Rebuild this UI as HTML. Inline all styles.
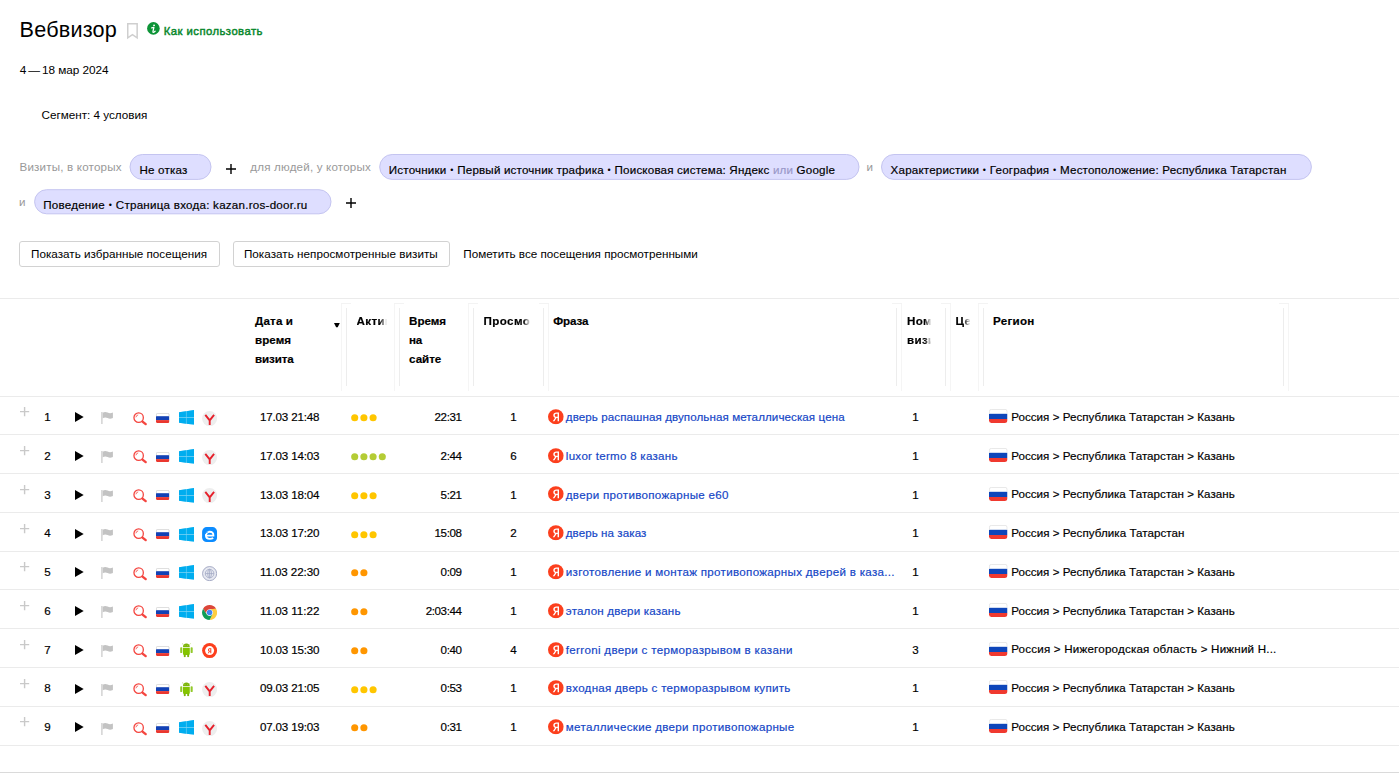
<!DOCTYPE html>
<html lang="ru"><head><meta charset="utf-8"><title>Вебвизор</title>
<style>
html,body{margin:0;padding:0;background:#fff}
body{width:1399px;height:773px;position:relative;overflow:hidden;font-family:"Liberation Sans",sans-serif;font-size:12px;color:#000}
.t{position:absolute;white-space:pre;line-height:20px}
.u{-webkit-text-stroke:0.18px}
.m{-webkit-text-stroke:0.45px}
.t u{text-decoration:none;letter-spacing:-1.3px}
.t b{font-weight:400;font-size:9px;vertical-align:0.8px;letter-spacing:0.5px;margin-left:0.3px;-webkit-text-stroke:0}
.t i{font-style:normal;color:#9a98c9}
.pill{position:absolute;box-sizing:border-box;background:#dedeff;border:1px solid #c9c9f3;border-radius:13px}
.btn{position:absolute;box-sizing:border-box;border:1px solid #d2d2d2;border-radius:3px;background:#fff}
.hl{position:absolute;left:0;width:1399px;height:1px;background:#ebebeb}
.v{position:absolute;width:1px}
.ic{position:absolute;overflow:visible}
.dot{position:absolute;width:7.4px;height:7.4px;border-radius:50%}
.fade{position:absolute;overflow:hidden;white-space:pre;line-height:20px;font-weight:700;font-size:11.6px;-webkit-text-stroke:0.18px;letter-spacing:0.4px}
</style></head><body>

<svg width="0" height="0" style="position:absolute">
<defs>
<clipPath id="c-ru"><rect x="0" y="0" width="13.4" height="10" rx="1.6"/></clipPath>
<clipPath id="c-ruf"><rect x="0" y="0" width="18.5" height="14" rx="2.4"/></clipPath>
<symbol id="i-play" viewBox="0 0 9 10" width="9" height="10"><path d="M0 0L8.7 5 0 10z" fill="#000"/></symbol>
<symbol id="i-flag" viewBox="0 0 13 12" width="13" height="12"><rect x="0" y="0" width="1.7" height="12" fill="#d8d8d8"/><path d="M1.7.7C3.4-.2 5-.1 6.6.6S9.8 1.4 11.9.5V6C9.8 6.9 8.2 6.8 6.6 6.1S3.4 5.3 1.7 6.3z" fill="#c3c3c3"/></symbol>
<symbol id="i-mag" viewBox="0 0 15 14" width="15" height="14"><circle cx="5.65" cy="5.65" r="4.7" fill="none" stroke="#f4453f" stroke-width="1.3"/><path d="M9.5 9.6L12.7 12.1" stroke="#f4453f" stroke-width="2.4" stroke-linecap="round"/><path d="M2.9 5.3A2.9 2.9 0 0 1 5.2 2.9" fill="none" stroke="#f4453f" stroke-width=".8"/></symbol>
<symbol id="i-ru" viewBox="0 0 14 10.2" width="14" height="10.2"><g clip-path="url(#c-ru)"><rect width="13.4" height="10" fill="#fff"/><rect y="3.2" width="13.4" height="4" fill="#1241b5"/><rect y="7.1" width="13.4" height="3" fill="#ea372f"/></g><path d="M.35 3.2V1.6A1.25 1.25 0 0 1 1.6.35h10.2a1.25 1.25 0 0 1 1.25 1.25v1.6" fill="none" stroke="#c9c9c9" stroke-width=".7"/></symbol>
<symbol id="i-ruf" viewBox="0 0 18.6 14" width="18.6" height="14"><g clip-path="url(#c-ruf)"><rect width="18.5" height="14" fill="#fff"/><rect y="4.8" width="18.5" height="5.3" fill="#0e46ba"/><rect y="10" width="18.5" height="4" fill="#f0392f"/></g><path d="M.4 4.8V2.4A2 2 0 0 1 2.4.4h13.7a2 2 0 0 1 2 2v2.4" fill="none" stroke="#e0e0e0" stroke-width=".8"/></symbol>
<symbol id="i-win" viewBox="0 0 15.2 15.2" width="15.2" height="14.8" preserveAspectRatio="none"><path d="M0 2.4L15 0V15.2L0 13z" fill="#7fd4f5"/><path d="M0 2.4L6.95 1.28V7.3H0zM7.5 1.2L15 0V7.3H7.5zM0 7.85H6.95V14.02L0 13zM7.5 7.85H15v7.35L7.5 14.1z" fill="#00adef"/></symbol>
<symbol id="i-yb" viewBox="0 0 15.2 15.2" width="15.2" height="15.2"><circle cx="7.6" cy="7.6" r="7.5" fill="#eee"/><path d="M3.3 3.8L7.7 9.4 12.1 3.8M7.7 9.2V14" fill="none" stroke="#e6212c" stroke-width="1.9"/></symbol>
<symbol id="i-edge" viewBox="0 0 15.2 15.2" width="15.2" height="15.2"><rect x=".1" y=".1" width="15" height="15" rx="4.6" fill="#0c8cff"/><path d="M4.2 8.6H11.4C11.5 6.1 10 4.7 7.8 4.7 5.6 4.7 3.9 6.1 3.9 8.3 3.9 10.6 5.5 11.9 7.9 11.9 9.2 11.9 10.3 11.6 11.2 11" fill="none" stroke="#fff" stroke-width="1.9"/><path d="M3.2 6.9C4 5.6 5 5 6.2 4.8" fill="none" stroke="#0c8cff" stroke-width=".9"/></symbol>
<symbol id="i-globe" viewBox="0 0 15.2 15.2" width="15.2" height="15.2"><circle cx="7.6" cy="7.6" r="7.05" fill="#e7e9f1" stroke="#9da3bf" stroke-width=".9"/><g fill="none" stroke="#9fa5c2" stroke-width=".75"><circle cx="7.6" cy="7.6" r="4.3"/><ellipse cx="7.6" cy="7.6" rx="1.9" ry="4.3"/><path d="M3.3 7.6h8.6M7.6 3.3v8.6"/></g></symbol>
<symbol id="i-chrome" viewBox="0 0 15.2 15.2" width="15.2" height="15.2"><circle cx="7.6" cy="7.6" r="7.3" fill="#fff"/><path d="M1.1 3.85A7.5 7.5 0 0 1 14.1 3.85L7.6 4.15A3.45 3.45 0 0 0 4.61 9.33z" fill="#dc4639"/><path d="M14.1 3.85A7.5 7.5 0 0 1 7.6 15.1L10.59 9.33A3.45 3.45 0 0 0 7.6 4.15z" fill="#ffcd40"/><path d="M7.6 15.1A7.5 7.5 0 0 1 1.1 3.85L4.61 9.33A3.45 3.45 0 0 0 10.59 9.33z" fill="#0f9d58"/><circle cx="7.6" cy="7.6" r="2.75" fill="#4285f4"/></symbol>
<symbol id="i-android" viewBox="0 0 13 14.4" width="13" height="14.4"><path d="M2 .4L3.5 1.7M10.8 .4L9.3 1.7" stroke="#9ccc3c" stroke-width=".5"/><path d="M3 4.2A3.4 3.6 0 0 1 9.8 4.2z" fill="#7db50a"/><path d="M3 4.9h6.8v6.2a.8.8 0 0 1-.8.8H3.8a.8.8 0 0 1-.8-.8z" fill="#84c400"/><rect x=".2" y="4.2" width="2.1" height="5.9" rx=".9" fill="#92c92a"/><rect x="10.6" y="4.2" width="2.1" height="5.9" rx=".9" fill="#92c92a"/><rect x="3.8" y="11.2" width="1.9" height="3.1" rx=".7" fill="#7db50a"/><rect x="7.2" y="11.2" width="1.9" height="3.1" rx=".7" fill="#7db50a"/><circle cx="5" cy="2.6" r=".35" fill="#d6efa0"/><circle cx="7.8" cy="2.6" r=".35" fill="#d6efa0"/></symbol>
<symbol id="i-ya" viewBox="0 0 15.2 15.2" width="15.2" height="15.2"><circle cx="7.6" cy="7.6" r="7.5" fill="#fc3f1d"/><circle cx="7.6" cy="7.6" r="4.5" fill="#fff"/><path d="M9.3 10.3H8.3V8.6H7.8L6.8 10.3H5.7L6.9 8.4C6.3 8.1 6 7.6 6 6.9 6 5.9 6.7 5.2 7.9 5.2H9.3zM8.3 6H8C7.4 6 7 6.3 7 6.9S7.4 7.8 8 7.8h.3z" fill="#fc3f1d" fill-rule="evenodd"/></symbol>
<symbol id="i-yas" viewBox="0 0 15.8 15.6" width="15.8" height="15.6"><ellipse cx="7.85" cy="7.75" rx="7.85" ry="7.6" fill="#fc3f1d"/><path d="M11 12.3H9.6V9H8.5L6.4 12.3H4.8L7.1 8.8C5.9 8.3 5.3 7.4 5.3 6.2 5.3 4.5 6.5 3.5 8.4 3.5H11zM9.6 4.7h-1c-1.1 0-1.8.5-1.8 1.5s.7 1.6 1.8 1.6h1z" fill="#fff" fill-rule="evenodd"/></symbol>
</defs></svg>

<svg class="ic" style="left:0;top:150px" width="1399" height="70" fill="#dedeff" stroke="#c4c4f0" stroke-width="1"><rect x="130.0" y="4.5" width="81.0" height="24.9" rx="12.45"/><rect x="379.7" y="4.5" width="479.3" height="24.9" rx="12.45"/><rect x="881.5" y="4.5" width="429.9" height="24.9" rx="12.45"/><rect x="34.6" y="39.7" width="296.4" height="24.1" rx="12.05"/></svg>
<div class="btn" style="left:19.3px;top:241px;width:200.4px;height:26.0px"></div>
<div class="btn" style="left:233.3px;top:241px;width:216.5px;height:26.0px"></div>
<div class="hl" style="top:298px"></div>
<div class="hl" style="top:396px"></div>
<div class="hl" style="top:434px"></div>
<div class="hl" style="top:473px"></div>
<div class="hl" style="top:512px"></div>
<div class="hl" style="top:551px"></div>
<div class="hl" style="top:589px"></div>
<div class="hl" style="top:628px"></div>
<div class="hl" style="top:667px"></div>
<div class="hl" style="top:706px"></div>
<div class="hl" style="top:745px"></div>
<div class="hl" style="top:772px;height:1px;background:#dadada"></div>
<div class="v" style="left:341px;top:303px;height:88px;background:#f5f5f5"></div>
<div class="v" style="left:346px;top:308px;height:78px;background:#ededed"></div>
<div style="position:absolute;left:341px;top:303px;width:10px;height:1px;background:#f3f3f3"></div>
<div class="v" style="left:394px;top:303px;height:88px;background:#f5f5f5"></div>
<div class="v" style="left:399px;top:308px;height:78px;background:#ededed"></div>
<div style="position:absolute;left:394px;top:303px;width:10px;height:1px;background:#f3f3f3"></div>
<div class="v" style="left:468px;top:303px;height:88px;background:#f5f5f5"></div>
<div class="v" style="left:473px;top:308px;height:78px;background:#ededed"></div>
<div style="position:absolute;left:468px;top:303px;width:10px;height:1px;background:#f3f3f3"></div>
<div class="v" style="left:978px;top:303px;height:88px;background:#f5f5f5"></div>
<div class="v" style="left:983px;top:308px;height:78px;background:#ededed"></div>
<div style="position:absolute;left:978px;top:303px;width:10px;height:1px;background:#f3f3f3"></div>
<div class="v" style="left:548px;top:303px;height:88px;background:#f5f5f5"></div>
<div class="v" style="left:543px;top:308px;height:78px;background:#ededed"></div>
<div style="position:absolute;left:539px;top:303px;width:10px;height:1px;background:#f3f3f3"></div>
<div class="v" style="left:901px;top:303px;height:88px;background:#f5f5f5"></div>
<div class="v" style="left:896px;top:308px;height:78px;background:#ededed"></div>
<div style="position:absolute;left:892px;top:303px;width:10px;height:1px;background:#f3f3f3"></div>
<div class="v" style="left:950px;top:303px;height:88px;background:#f5f5f5"></div>
<div class="v" style="left:945px;top:308px;height:78px;background:#ededed"></div>
<div style="position:absolute;left:941px;top:303px;width:10px;height:1px;background:#f3f3f3"></div>
<div class="v" style="left:1288px;top:303px;height:88px;background:#f5f5f5"></div>
<div class="v" style="left:1283px;top:308px;height:78px;background:#ededed"></div>
<div style="position:absolute;left:1279px;top:303px;width:10px;height:1px;background:#f3f3f3"></div>
<div class="fade" style="left:356.5px;top:311.0px;width:30px;-webkit-mask-image:linear-gradient(to right,#000 23px,transparent 30px);mask-image:linear-gradient(to right,#000 23px,transparent 30px)">Активность</div>
<div class="fade" style="left:483.5px;top:311.0px;width:46.5px;-webkit-mask-image:linear-gradient(to right,#000 39.5px,transparent 46.5px);mask-image:linear-gradient(to right,#000 39.5px,transparent 46.5px)">Просмотры</div>
<div class="fade" style="left:906.9px;top:311.0px;width:24.5px;-webkit-mask-image:linear-gradient(to right,#000 17.5px,transparent 24.5px);mask-image:linear-gradient(to right,#000 17.5px,transparent 24.5px)">Номер</div>
<div class="fade" style="left:906.9px;top:329.9px;width:24.5px;-webkit-mask-image:linear-gradient(to right,#000 17.5px,transparent 24.5px);mask-image:linear-gradient(to right,#000 17.5px,transparent 24.5px)">визита</div>
<div class="fade" style="left:955.5px;top:311.0px;width:14.5px;-webkit-mask-image:linear-gradient(to right,#000 7.5px,transparent 14.5px);mask-image:linear-gradient(to right,#000 7.5px,transparent 14.5px)">Цели</div>
<span class="t" style="left:19.50px;top:19.70px;font-size:21.6px;letter-spacing:0.231px;">Вебвизор</span>
<span class="t m" style="left:163.80px;top:20.60px;font-size:11.3px;color:#07872b;letter-spacing:0.454px;">Как использовать</span>
<span class="t" style="left:19.70px;top:60.00px;font-size:11.8px;letter-spacing:-0.046px;">4<u> </u>—<u> </u>18 мар 2024</span>
<span class="t" style="left:41.60px;top:104.60px;font-size:11.7px;letter-spacing:-0.010px;">Сегмент: 4 условия</span>
<span class="t" style="left:19.50px;top:156.70px;font-size:11.6px;color:#999;letter-spacing:0.184px;">Визиты, в которых</span>
<span class="t u" style="left:139.40px;top:159.80px;font-size:11.6px;letter-spacing:0.198px;">Не отказ</span>
<span class="t" style="left:250.30px;top:156.70px;font-size:11.6px;color:#999;letter-spacing:0.185px;">для людей, у которых</span>
<span class="t u" style="left:388.80px;top:159.80px;font-size:11.6px;letter-spacing:0.187px;">Источники <b>•</b> Первый источник трафика <b>•</b> Поисковая система: Яндекс <i>или</i> Google</span>
<span class="t" style="left:866.60px;top:156.70px;font-size:11.6px;color:#999;">и</span>
<span class="t u" style="left:890.60px;top:159.80px;font-size:11.6px;letter-spacing:0.180px;">Характеристики <b>•</b> География <b>•</b> Местоположение: Республика Татарстан</span>
<span class="t" style="left:19.10px;top:191.60px;font-size:11.6px;color:#999;">и</span>
<span class="t u" style="left:43.20px;top:194.90px;font-size:11.6px;letter-spacing:0.242px;">Поведение <b>•</b> Страница входа: kazan.ros-door.ru</span>
<span class="t" style="left:31.10px;top:243.60px;font-size:11.7px;">Показать избранные посещения</span>
<span class="t" style="left:243.90px;top:243.60px;font-size:11.7px;letter-spacing:0.025px;">Показать непросмотренные визиты</span>
<span class="t" style="left:463.30px;top:243.60px;font-size:11.7px;letter-spacing:-0.005px;">Пометить все посещения просмотренными</span>
<span class="t u" style="left:255.10px;top:311.00px;font-size:11.6px;font-weight:700;letter-spacing:0.135px;">Дата и</span>
<span class="t u" style="left:255.10px;top:329.90px;font-size:11.6px;font-weight:700;letter-spacing:0.028px;">время</span>
<span class="t u" style="left:255.10px;top:348.80px;font-size:11.6px;font-weight:700;letter-spacing:-0.130px;">визита</span>
<span class="t u" style="left:409.10px;top:311.00px;font-size:11.6px;font-weight:700;letter-spacing:-0.039px;">Время</span>
<span class="t u" style="left:409.10px;top:329.90px;font-size:11.6px;font-weight:700;letter-spacing:-0.227px;">на</span>
<span class="t u" style="left:409.10px;top:348.80px;font-size:11.6px;font-weight:700;letter-spacing:-0.039px;">сайте</span>
<span class="t u" style="left:553.30px;top:311.00px;font-size:11.6px;font-weight:700;letter-spacing:-0.125px;">Фраза</span>
<span class="t u" style="left:993.00px;top:311.00px;font-size:11.6px;font-weight:700;letter-spacing:0.260px;">Регион</span>
<span class="t u" style="left:27.50px;width:40px;text-align:center;top:407.15px;font-size:11.6px;">1</span>
<span class="t u" style="left:259.90px;top:407.15px;font-size:11.6px;letter-spacing:-0.159px;">17.03 21:48</span>
<span class="t u" style="right:937.50px;letter-spacing:-0.42px;top:407.15px;font-size:11.6px;">22:31</span>
<span class="t u" style="left:493.60px;width:40px;text-align:center;top:407.15px;font-size:11.6px;">1</span>
<span class="t u" style="left:565.80px;top:407.15px;font-size:11.6px;color:#1446c6;letter-spacing:0.083px;">дверь распашная двупольная металлическая цена</span>
<span class="t u" style="left:895.50px;width:40px;text-align:center;top:407.15px;font-size:11.6px;">1</span>
<span class="t u" style="left:1011.20px;top:406.85px;font-size:11.6px;letter-spacing:0.031px;">Россия &gt; Республика Татарстан &gt; Казань</span>
<span class="t u" style="left:27.50px;width:40px;text-align:center;top:445.91px;font-size:11.6px;">2</span>
<span class="t u" style="left:259.90px;top:445.91px;font-size:11.6px;letter-spacing:-0.159px;">17.03 14:03</span>
<span class="t u" style="right:937.50px;letter-spacing:-0.42px;top:445.91px;font-size:11.6px;">2:44</span>
<span class="t u" style="left:493.60px;width:40px;text-align:center;top:445.91px;font-size:11.6px;">6</span>
<span class="t u" style="left:565.80px;top:445.91px;font-size:11.6px;color:#1446c6;letter-spacing:0.263px;">luxor termo 8 казань</span>
<span class="t u" style="left:895.50px;width:40px;text-align:center;top:445.91px;font-size:11.6px;">1</span>
<span class="t u" style="left:1011.20px;top:445.61px;font-size:11.6px;letter-spacing:0.031px;">Россия &gt; Республика Татарстан &gt; Казань</span>
<span class="t u" style="left:27.50px;width:40px;text-align:center;top:484.67px;font-size:11.6px;">3</span>
<span class="t u" style="left:259.90px;top:484.67px;font-size:11.6px;letter-spacing:-0.159px;">13.03 18:04</span>
<span class="t u" style="right:937.50px;letter-spacing:-0.42px;top:484.67px;font-size:11.6px;">5:21</span>
<span class="t u" style="left:493.60px;width:40px;text-align:center;top:484.67px;font-size:11.6px;">1</span>
<span class="t u" style="left:565.80px;top:484.67px;font-size:11.6px;color:#1446c6;letter-spacing:0.297px;">двери противопожарные е60</span>
<span class="t u" style="left:895.50px;width:40px;text-align:center;top:484.67px;font-size:11.6px;">1</span>
<span class="t u" style="left:1011.20px;top:484.37px;font-size:11.6px;letter-spacing:0.031px;">Россия &gt; Республика Татарстан &gt; Казань</span>
<span class="t u" style="left:27.50px;width:40px;text-align:center;top:523.43px;font-size:11.6px;">4</span>
<span class="t u" style="left:259.90px;top:523.43px;font-size:11.6px;letter-spacing:-0.159px;">13.03 17:20</span>
<span class="t u" style="right:937.50px;letter-spacing:-0.42px;top:523.43px;font-size:11.6px;">15:08</span>
<span class="t u" style="left:493.60px;width:40px;text-align:center;top:523.43px;font-size:11.6px;">2</span>
<span class="t u" style="left:565.80px;top:523.43px;font-size:11.6px;color:#1446c6;letter-spacing:0.061px;">дверь на заказ</span>
<span class="t u" style="left:895.50px;width:40px;text-align:center;top:523.43px;font-size:11.6px;">1</span>
<span class="t u" style="left:1011.20px;top:523.13px;font-size:11.6px;letter-spacing:0.048px;">Россия &gt; Республика Татарстан</span>
<span class="t u" style="left:27.50px;width:40px;text-align:center;top:562.19px;font-size:11.6px;">5</span>
<span class="t u" style="left:259.90px;top:562.19px;font-size:11.6px;letter-spacing:-0.081px;">11.03 22:30</span>
<span class="t u" style="right:937.50px;letter-spacing:-0.42px;top:562.19px;font-size:11.6px;">0:09</span>
<span class="t u" style="left:493.60px;width:40px;text-align:center;top:562.19px;font-size:11.6px;">1</span>
<span class="t u" style="left:565.80px;top:562.19px;font-size:11.6px;color:#1446c6;letter-spacing:0.301px;">изготовление и монтаж противопожарных дверей в каза...</span>
<span class="t u" style="left:895.50px;width:40px;text-align:center;top:562.19px;font-size:11.6px;">1</span>
<span class="t u" style="left:1011.20px;top:561.89px;font-size:11.6px;letter-spacing:0.031px;">Россия &gt; Республика Татарстан &gt; Казань</span>
<span class="t u" style="left:27.50px;width:40px;text-align:center;top:600.95px;font-size:11.6px;">6</span>
<span class="t u" style="left:259.90px;top:600.95px;font-size:11.6px;">11.03 11:22</span>
<span class="t u" style="right:937.50px;letter-spacing:-0.42px;top:600.95px;font-size:11.6px;">2:03:44</span>
<span class="t u" style="left:493.60px;width:40px;text-align:center;top:600.95px;font-size:11.6px;">1</span>
<span class="t u" style="left:565.80px;top:600.95px;font-size:11.6px;color:#1446c6;letter-spacing:0.174px;">эталон двери казань</span>
<span class="t u" style="left:895.50px;width:40px;text-align:center;top:600.95px;font-size:11.6px;">1</span>
<span class="t u" style="left:1011.20px;top:600.65px;font-size:11.6px;letter-spacing:0.031px;">Россия &gt; Республика Татарстан &gt; Казань</span>
<span class="t u" style="left:27.50px;width:40px;text-align:center;top:639.71px;font-size:11.6px;">7</span>
<span class="t u" style="left:259.90px;top:639.71px;font-size:11.6px;letter-spacing:-0.159px;">10.03 15:30</span>
<span class="t u" style="right:937.50px;letter-spacing:-0.42px;top:639.71px;font-size:11.6px;">0:40</span>
<span class="t u" style="left:493.60px;width:40px;text-align:center;top:639.71px;font-size:11.6px;">4</span>
<span class="t u" style="left:565.80px;top:639.71px;font-size:11.6px;color:#1446c6;letter-spacing:0.308px;">ferroni двери с терморазрывом в казани</span>
<span class="t u" style="left:895.50px;width:40px;text-align:center;top:639.71px;font-size:11.6px;">3</span>
<span class="t u" style="left:1011.20px;top:639.41px;font-size:11.6px;letter-spacing:0.199px;">Россия &gt; Нижегородская область &gt; Нижний Н...</span>
<span class="t u" style="left:27.50px;width:40px;text-align:center;top:678.47px;font-size:11.6px;">8</span>
<span class="t u" style="left:259.90px;top:678.47px;font-size:11.6px;letter-spacing:-0.159px;">09.03 21:05</span>
<span class="t u" style="right:937.50px;letter-spacing:-0.42px;top:678.47px;font-size:11.6px;">0:53</span>
<span class="t u" style="left:493.60px;width:40px;text-align:center;top:678.47px;font-size:11.6px;">1</span>
<span class="t u" style="left:565.80px;top:678.47px;font-size:11.6px;color:#1446c6;letter-spacing:0.266px;">входная дверь с терморазрывом купить</span>
<span class="t u" style="left:895.50px;width:40px;text-align:center;top:678.47px;font-size:11.6px;">1</span>
<span class="t u" style="left:1011.20px;top:678.17px;font-size:11.6px;letter-spacing:0.031px;">Россия &gt; Республика Татарстан &gt; Казань</span>
<span class="t u" style="left:27.50px;width:40px;text-align:center;top:717.23px;font-size:11.6px;">9</span>
<span class="t u" style="left:259.90px;top:717.23px;font-size:11.6px;letter-spacing:-0.159px;">07.03 19:03</span>
<span class="t u" style="right:937.50px;letter-spacing:-0.42px;top:717.23px;font-size:11.6px;">0:31</span>
<span class="t u" style="left:493.60px;width:40px;text-align:center;top:717.23px;font-size:11.6px;">1</span>
<span class="t u" style="left:565.80px;top:717.23px;font-size:11.6px;color:#1446c6;letter-spacing:0.301px;">металлические двери противопожарные</span>
<span class="t u" style="left:895.50px;width:40px;text-align:center;top:717.23px;font-size:11.6px;">1</span>
<span class="t u" style="left:1011.20px;top:716.93px;font-size:11.6px;letter-spacing:0.031px;">Россия &gt; Республика Татарстан &gt; Казань</span>
<svg class="ic" style="left:334px;top:323px" width="6" height="5" viewBox="0 0 6 5"><path d="M0 0h5.8L3.7 4.2H2.1z" fill="#000"/></svg>
<svg class="ic" style="left:126px;top:22px" width="13" height="18" viewBox="0 0 13 18"><path d="M1.75 1.75h9.4v14.1L6.45 12.6 1.75 15.85z" fill="none" stroke="#cfcfcf" stroke-width="1.5" stroke-linejoin="miter"/></svg>
<svg class="ic" style="left:146.6px;top:22.1px" width="13" height="13" viewBox="0 0 13 13"><circle cx="6.4" cy="6.4" r="6.3" fill="#0d9437"/><circle cx="7.05" cy="3.35" r="0.95" fill="#fff"/><path d="M4.7 5.8L6.9 5.35 5.95 9.5C5.75 10.5 6.5 10.6 7.2 10.05L8.1 9.2" fill="none" stroke="#fff" stroke-width="1.25" stroke-linejoin="round" stroke-linecap="round"/></svg>
<svg class="ic" style="left:226.3px;top:163.7px" width="10" height="10" viewBox="0 0 10 10"><path d="M5.0 0v10M0 5.0h10" stroke="#000" stroke-width="1.4" fill="none"/></svg>
<svg class="ic" style="left:346.4px;top:197.7px" width="10" height="10" viewBox="0 0 10 10"><path d="M5.0 0v10M0 5.0h10" stroke="#000" stroke-width="1.4" fill="none"/></svg>
<svg class="ic" style="left:20.2px;top:407.2px" width="9.2" height="9.2" viewBox="0 0 9.2 9.2"><path d="M4.6 0v9.2M0 4.6h9.2" stroke="#c9c9c9" stroke-width="1.4" fill="none"/></svg>
<svg class="ic" style="left:75.2px;top:412.2px" width="9" height="10"><use href="#i-play"/></svg>
<svg class="ic" style="left:100.9px;top:412.4px" width="13" height="12"><use href="#i-flag"/></svg>
<svg class="ic" style="left:132.8px;top:411.6px" width="15" height="14"><use href="#i-mag"/></svg>
<svg class="ic" style="left:155.8px;top:412.9px" width="14" height="10.2"><use href="#i-ru"/></svg>
<svg class="ic" style="left:179.0px;top:410.3px" width="15.2" height="14.8"><use href="#i-win"/></svg>
<svg class="ic" style="left:201.8px;top:410.8px" width="15.2" height="15.2"><use href="#i-yb"/></svg>
<svg class="ic" style="left:350.9px;top:414.3px" width="27.6" height="8" fill="#ffc600"><circle cx="3.7" cy="3.8" r="3.55"/><circle cx="12.9" cy="3.8" r="3.55"/><circle cx="22.1" cy="3.8" r="3.55"/></svg>
<svg class="ic" style="left:548.0px;top:408.9px" width="15.8" height="15.6"><use href="#i-yas"/></svg>
<svg class="ic" style="left:988.8px;top:409.1px" width="18.6" height="13.8"><use href="#i-ruf"/></svg>
<svg class="ic" style="left:20.2px;top:446.0px" width="9.2" height="9.2" viewBox="0 0 9.2 9.2"><path d="M4.6 0v9.2M0 4.6h9.2" stroke="#c9c9c9" stroke-width="1.4" fill="none"/></svg>
<svg class="ic" style="left:75.2px;top:451.0px" width="9" height="10"><use href="#i-play"/></svg>
<svg class="ic" style="left:100.9px;top:451.2px" width="13" height="12"><use href="#i-flag"/></svg>
<svg class="ic" style="left:132.8px;top:450.4px" width="15" height="14"><use href="#i-mag"/></svg>
<svg class="ic" style="left:155.8px;top:451.7px" width="14" height="10.2"><use href="#i-ru"/></svg>
<svg class="ic" style="left:179.0px;top:449.1px" width="15.2" height="14.8"><use href="#i-win"/></svg>
<svg class="ic" style="left:201.8px;top:449.6px" width="15.2" height="15.2"><use href="#i-yb"/></svg>
<svg class="ic" style="left:350.9px;top:453.1px" width="36.8" height="8" fill="#b4cc35"><circle cx="3.7" cy="3.8" r="3.55"/><circle cx="12.9" cy="3.8" r="3.55"/><circle cx="22.1" cy="3.8" r="3.55"/><circle cx="31.3" cy="3.8" r="3.55"/></svg>
<svg class="ic" style="left:548.0px;top:447.7px" width="15.8" height="15.6"><use href="#i-yas"/></svg>
<svg class="ic" style="left:988.8px;top:447.9px" width="18.6" height="13.8"><use href="#i-ruf"/></svg>
<svg class="ic" style="left:20.2px;top:484.7px" width="9.2" height="9.2" viewBox="0 0 9.2 9.2"><path d="M4.6 0v9.2M0 4.6h9.2" stroke="#c9c9c9" stroke-width="1.4" fill="none"/></svg>
<svg class="ic" style="left:75.2px;top:489.7px" width="9" height="10"><use href="#i-play"/></svg>
<svg class="ic" style="left:100.9px;top:489.9px" width="13" height="12"><use href="#i-flag"/></svg>
<svg class="ic" style="left:132.8px;top:489.1px" width="15" height="14"><use href="#i-mag"/></svg>
<svg class="ic" style="left:155.8px;top:490.4px" width="14" height="10.2"><use href="#i-ru"/></svg>
<svg class="ic" style="left:179.0px;top:487.8px" width="15.2" height="14.8"><use href="#i-win"/></svg>
<svg class="ic" style="left:201.8px;top:488.3px" width="15.2" height="15.2"><use href="#i-yb"/></svg>
<svg class="ic" style="left:350.9px;top:491.8px" width="27.6" height="8" fill="#ffc600"><circle cx="3.7" cy="3.8" r="3.55"/><circle cx="12.9" cy="3.8" r="3.55"/><circle cx="22.1" cy="3.8" r="3.55"/></svg>
<svg class="ic" style="left:548.0px;top:486.4px" width="15.8" height="15.6"><use href="#i-yas"/></svg>
<svg class="ic" style="left:988.8px;top:486.6px" width="18.6" height="13.8"><use href="#i-ruf"/></svg>
<svg class="ic" style="left:20.2px;top:523.5px" width="9.2" height="9.2" viewBox="0 0 9.2 9.2"><path d="M4.6 0v9.2M0 4.6h9.2" stroke="#c9c9c9" stroke-width="1.4" fill="none"/></svg>
<svg class="ic" style="left:75.2px;top:528.5px" width="9" height="10"><use href="#i-play"/></svg>
<svg class="ic" style="left:100.9px;top:528.7px" width="13" height="12"><use href="#i-flag"/></svg>
<svg class="ic" style="left:132.8px;top:527.9px" width="15" height="14"><use href="#i-mag"/></svg>
<svg class="ic" style="left:155.8px;top:529.2px" width="14" height="10.2"><use href="#i-ru"/></svg>
<svg class="ic" style="left:179.0px;top:526.6px" width="15.2" height="14.8"><use href="#i-win"/></svg>
<svg class="ic" style="left:201.8px;top:527.1px" width="15.2" height="15.2"><use href="#i-edge"/></svg>
<svg class="ic" style="left:350.9px;top:530.6px" width="27.6" height="8" fill="#ffc600"><circle cx="3.7" cy="3.8" r="3.55"/><circle cx="12.9" cy="3.8" r="3.55"/><circle cx="22.1" cy="3.8" r="3.55"/></svg>
<svg class="ic" style="left:548.0px;top:525.2px" width="15.8" height="15.6"><use href="#i-yas"/></svg>
<svg class="ic" style="left:988.8px;top:525.4px" width="18.6" height="13.8"><use href="#i-ruf"/></svg>
<svg class="ic" style="left:20.2px;top:562.2px" width="9.2" height="9.2" viewBox="0 0 9.2 9.2"><path d="M4.6 0v9.2M0 4.6h9.2" stroke="#c9c9c9" stroke-width="1.4" fill="none"/></svg>
<svg class="ic" style="left:75.2px;top:567.2px" width="9" height="10"><use href="#i-play"/></svg>
<svg class="ic" style="left:100.9px;top:567.4px" width="13" height="12"><use href="#i-flag"/></svg>
<svg class="ic" style="left:132.8px;top:566.6px" width="15" height="14"><use href="#i-mag"/></svg>
<svg class="ic" style="left:155.8px;top:567.9px" width="14" height="10.2"><use href="#i-ru"/></svg>
<svg class="ic" style="left:179.0px;top:565.3px" width="15.2" height="14.8"><use href="#i-win"/></svg>
<svg class="ic" style="left:201.8px;top:565.8px" width="15.2" height="15.2"><use href="#i-globe"/></svg>
<svg class="ic" style="left:350.9px;top:569.3px" width="18.4" height="8" fill="#ff9600"><circle cx="3.7" cy="3.8" r="3.55"/><circle cx="12.9" cy="3.8" r="3.55"/></svg>
<svg class="ic" style="left:548.0px;top:563.9px" width="15.8" height="15.6"><use href="#i-yas"/></svg>
<svg class="ic" style="left:988.8px;top:564.1px" width="18.6" height="13.8"><use href="#i-ruf"/></svg>
<svg class="ic" style="left:20.2px;top:601.0px" width="9.2" height="9.2" viewBox="0 0 9.2 9.2"><path d="M4.6 0v9.2M0 4.6h9.2" stroke="#c9c9c9" stroke-width="1.4" fill="none"/></svg>
<svg class="ic" style="left:75.2px;top:606.0px" width="9" height="10"><use href="#i-play"/></svg>
<svg class="ic" style="left:100.9px;top:606.2px" width="13" height="12"><use href="#i-flag"/></svg>
<svg class="ic" style="left:132.8px;top:605.4px" width="15" height="14"><use href="#i-mag"/></svg>
<svg class="ic" style="left:155.8px;top:606.7px" width="14" height="10.2"><use href="#i-ru"/></svg>
<svg class="ic" style="left:179.0px;top:604.1px" width="15.2" height="14.8"><use href="#i-win"/></svg>
<svg class="ic" style="left:201.8px;top:604.6px" width="15.2" height="15.2"><use href="#i-chrome"/></svg>
<svg class="ic" style="left:350.9px;top:608.1px" width="18.4" height="8" fill="#ff9600"><circle cx="3.7" cy="3.8" r="3.55"/><circle cx="12.9" cy="3.8" r="3.55"/></svg>
<svg class="ic" style="left:548.0px;top:602.7px" width="15.8" height="15.6"><use href="#i-yas"/></svg>
<svg class="ic" style="left:988.8px;top:602.9px" width="18.6" height="13.8"><use href="#i-ruf"/></svg>
<svg class="ic" style="left:20.2px;top:639.8px" width="9.2" height="9.2" viewBox="0 0 9.2 9.2"><path d="M4.6 0v9.2M0 4.6h9.2" stroke="#c9c9c9" stroke-width="1.4" fill="none"/></svg>
<svg class="ic" style="left:75.2px;top:644.8px" width="9" height="10"><use href="#i-play"/></svg>
<svg class="ic" style="left:100.9px;top:645.0px" width="13" height="12"><use href="#i-flag"/></svg>
<svg class="ic" style="left:132.8px;top:644.2px" width="15" height="14"><use href="#i-mag"/></svg>
<svg class="ic" style="left:155.8px;top:645.5px" width="14" height="10.2"><use href="#i-ru"/></svg>
<svg class="ic" style="left:180.0px;top:643.4px" width="13" height="14.4"><use href="#i-android"/></svg>
<svg class="ic" style="left:201.8px;top:643.4px" width="15.2" height="15.2"><use href="#i-ya"/></svg>
<svg class="ic" style="left:350.9px;top:646.9px" width="18.4" height="8" fill="#ff9600"><circle cx="3.7" cy="3.8" r="3.55"/><circle cx="12.9" cy="3.8" r="3.55"/></svg>
<svg class="ic" style="left:548.0px;top:641.5px" width="15.8" height="15.6"><use href="#i-yas"/></svg>
<svg class="ic" style="left:988.8px;top:641.7px" width="18.6" height="13.8"><use href="#i-ruf"/></svg>
<svg class="ic" style="left:20.2px;top:678.5px" width="9.2" height="9.2" viewBox="0 0 9.2 9.2"><path d="M4.6 0v9.2M0 4.6h9.2" stroke="#c9c9c9" stroke-width="1.4" fill="none"/></svg>
<svg class="ic" style="left:75.2px;top:683.5px" width="9" height="10"><use href="#i-play"/></svg>
<svg class="ic" style="left:100.9px;top:683.7px" width="13" height="12"><use href="#i-flag"/></svg>
<svg class="ic" style="left:132.8px;top:682.9px" width="15" height="14"><use href="#i-mag"/></svg>
<svg class="ic" style="left:155.8px;top:684.2px" width="14" height="10.2"><use href="#i-ru"/></svg>
<svg class="ic" style="left:180.0px;top:682.1px" width="13" height="14.4"><use href="#i-android"/></svg>
<svg class="ic" style="left:201.8px;top:682.1px" width="15.2" height="15.2"><use href="#i-yb"/></svg>
<svg class="ic" style="left:350.9px;top:685.6px" width="27.6" height="8" fill="#ffc600"><circle cx="3.7" cy="3.8" r="3.55"/><circle cx="12.9" cy="3.8" r="3.55"/><circle cx="22.1" cy="3.8" r="3.55"/></svg>
<svg class="ic" style="left:548.0px;top:680.2px" width="15.8" height="15.6"><use href="#i-yas"/></svg>
<svg class="ic" style="left:988.8px;top:680.4px" width="18.6" height="13.8"><use href="#i-ruf"/></svg>
<svg class="ic" style="left:20.2px;top:717.3px" width="9.2" height="9.2" viewBox="0 0 9.2 9.2"><path d="M4.6 0v9.2M0 4.6h9.2" stroke="#c9c9c9" stroke-width="1.4" fill="none"/></svg>
<svg class="ic" style="left:75.2px;top:722.3px" width="9" height="10"><use href="#i-play"/></svg>
<svg class="ic" style="left:100.9px;top:722.5px" width="13" height="12"><use href="#i-flag"/></svg>
<svg class="ic" style="left:132.8px;top:721.7px" width="15" height="14"><use href="#i-mag"/></svg>
<svg class="ic" style="left:155.8px;top:723.0px" width="14" height="10.2"><use href="#i-ru"/></svg>
<svg class="ic" style="left:179.0px;top:720.4px" width="15.2" height="14.8"><use href="#i-win"/></svg>
<svg class="ic" style="left:201.8px;top:720.9px" width="15.2" height="15.2"><use href="#i-yb"/></svg>
<svg class="ic" style="left:350.9px;top:724.4px" width="18.4" height="8" fill="#ff9600"><circle cx="3.7" cy="3.8" r="3.55"/><circle cx="12.9" cy="3.8" r="3.55"/></svg>
<svg class="ic" style="left:548.0px;top:719.0px" width="15.8" height="15.6"><use href="#i-yas"/></svg>
<svg class="ic" style="left:988.8px;top:719.2px" width="18.6" height="13.8"><use href="#i-ruf"/></svg>
</body></html>
